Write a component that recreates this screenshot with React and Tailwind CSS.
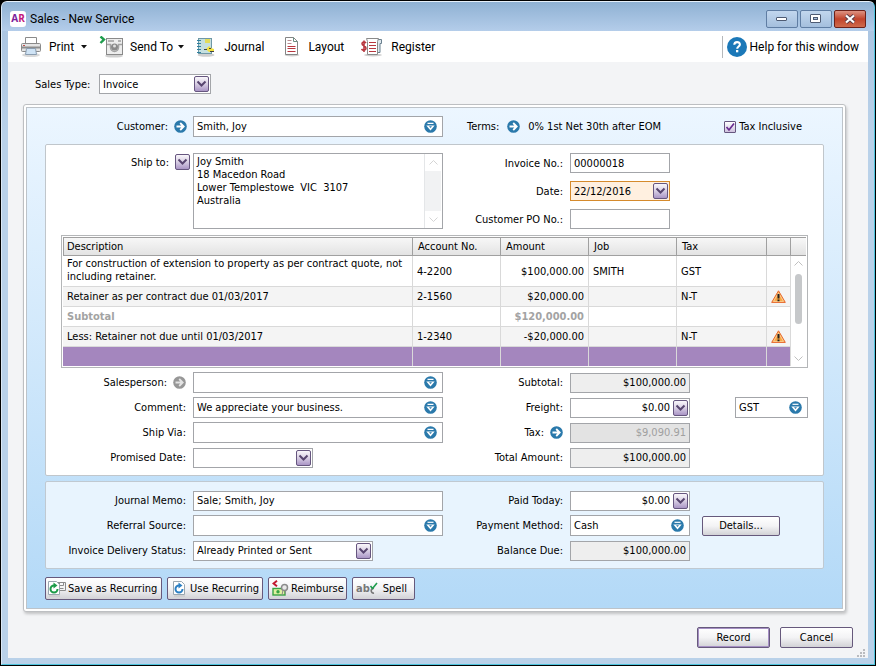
import { useState } from "react";
import clsx from "clsx";

/* ---------- icons ---------- */

function PrinterIcon() {
  return (
    <svg width="22" height="22" viewBox="0 0 22 22">
      <ellipse cx="11" cy="19" rx="9" ry="2" fill="#d9d9d9" />
      <path d="M5.5 8V1.5h11V8" fill="#fff" stroke="#8a8a8a" />
      <rect x="1.5" y="7.5" width="19" height="8" rx="1" fill="#e4e4e4" stroke="#8a8a8a" />
      <path d="M2 11.5h18" stroke="#8d8d8d" strokeWidth="2" />
      <rect x="3" y="9" width="2" height="1" fill="#c0504d" />
      <path d="M6.5 12.5h9l1 6h-11z" fill="#cfe3f5" stroke="#8a9db0" />
    </svg>
  );
}

function SendIcon() {
  return (
    <svg width="26" height="22" viewBox="0 0 26 22">
      <ellipse cx="15" cy="20" rx="9" ry="1.6" fill="#cfcfcf" />
      <path d="M1.5 .5 5 3.5 1.5 7" fill="none" stroke="#1f9d4d" strokeWidth="2.4" />
      <rect x="7.5" y="2.5" width="16" height="16" fill="#ededed" stroke="#8a8a8a" />
      <path d="M9 5h6M19 5h3" stroke="#777" />
      <path d="M8 8.5h3.500v3a4 4 0 0 0 8 0v-3H23" fill="none" stroke="#a2a2a2" strokeWidth="1.5" />
      <circle cx="15.5" cy="11" r="3.5" fill="#8a8a8a" />
      <circle cx="15.5" cy="10" r="1.5" fill="#e0e0e0" />
    </svg>
  );
}

function JournalIcon() {
  return (
    <svg width="20" height="22" viewBox="0 0 20 22">
      <ellipse cx="10" cy="19" rx="8.5" ry="1.8" fill="#cfcfcf" />
      <rect x="2.5" y="2.5" width="13" height="15" fill="#c5e0e0" stroke="#6f98a6" />
      <path d="M1 4.500h4M1 7.500h4M1 10.500h4M1 13.500h4M1 16.500h4" stroke="#2f7f9e" />
      <path d="M9 3h5v4H9z" fill="#e3dc5a" />
      <path d="m10 13 3-3 2 2 3 1v3h-5z" fill="#f2e03c" />
      <path d="M8 13.500h3M13 12.500h2M14 15.500h4" stroke="#444" />
    </svg>
  );
}

function LayoutIcon() {
  return (
    <svg width="16" height="22" viewBox="0 0 16 22">
      <ellipse cx="8" cy="19" rx="7.5" ry="1.5" fill="#cfcfcf" />
      <path d="M1.5 1.5h8l4 4v13h-12z" fill="#fff" stroke="#858585" />
      <path d="M9.5 1.5v4h4" fill="none" stroke="#6c8f83" />
      <path d="M3.5 4.5h4M3.5 7.5h4" stroke="#b88d90" />
      <path d="M3.500 10.500h8M3.500 12.500h8M3.500 15.500h8" stroke="#b8373f" />
    </svg>
  );
}

function RegisterIcon() {
  return (
    <svg width="23" height="22" viewBox="0 0 23 22">
      <ellipse cx="13" cy="19" rx="9" ry="1.5" fill="#cfcfcf" />
      <path d="M18 3.5h3.500v4H20v9h-2" fill="#dfe8ee" stroke="#6b8190" />
      <path d="M6.500 2.500h12l-1 3v13h-10v-13z" fill="#fff" stroke="#8a8a8a" />
      <path d="M9 6.500h7M9 9.500h7M9 12.500h7M9 15.500h7" stroke="#b8373f" />
      <path d="M6 7C5 5.500 2 5.500 2 7.800S6 10 6 12.200 3 15 1.500 13M4 4.500v11.500" fill="none" stroke="#b8373f" strokeWidth="1.600" />
    </svg>
  );
}

function HelpIcon() {
  return (
    <svg width="20" height="20" viewBox="0 0 20 20">
      <circle cx="10" cy="10" r="10" fill="#1b78b8" />
      <path d="M7.300 7.800c0-3.600 5.600-3.500 5.600-.3 0 2-2.700 2-2.700 4.200" fill="none" stroke="#fff" strokeWidth="2.100" />
      <rect x="9" y="13" width="2.300" height="2.300" fill="#fff" />
    </svg>
  );
}

function ArrowIcon({ muted }) {
  return (
    <svg width="13" height="13" viewBox="0 0 13 13">
      <circle cx="6.5" cy="6.5" r="6.3" fill={muted ? "#979797" : "#2a79ab"} />
      <path d="M2.500 6.500h7M6.200 3l3.500 3.500L6.200 10" fill="none" stroke={muted ? "#e4e4e4" : "#fff"} strokeWidth="1.800" />
    </svg>
  );
}

function LookupIcon() {
  return (
    <svg width="13" height="13" viewBox="0 0 13 13">
      <circle cx="6.5" cy="6.5" r="6.3" fill="#2a79ab" />
      <path d="M3.500 3.300h6" stroke="#fff" strokeWidth="1.200" />
      <path d="M2.300 5.500h8.400L6.500 10.500z" fill="#fff" />
      <path d="M5 6.200h3L6.500 8z" fill="#2a79ab" />
    </svg>
  );
}

function DropIcon() {
  return (
    <svg width="15" height="16" viewBox="0 0 15 16">
      <defs>
        <linearGradient id="drop" x2="0" y2="1">
          <stop offset="0" stopColor="#fbf9fc" />
          <stop offset=".45" stopColor="#dcd3e6" />
          <stop offset="1" stopColor="#a792c4" />
        </linearGradient>
      </defs>
      <rect x=".5" y=".5" width="14" height="15" rx="1.5" fill="url(#drop)" stroke="#66567f" />
      <path d="m3.5 5.5 4 4 4-4" fill="none" stroke="#57456f" strokeWidth="2" />
    </svg>
  );
}

function WarningIcon() {
  return (
    <svg className="mx-auto" width="15" height="13" viewBox="0 0 15 13">
      <path d="M7.500.8 14.300 12.400H.7z" fill="#f7a540" stroke="#e8672e" strokeLinejoin="round" />
      <path d="M7.500 2.800 12.500 11.400h-10z" fill="none" stroke="#fbd9a8" strokeWidth=".8" />
      <path d="M7.500 4v4.500M7.500 9.500v1.800" stroke="#222" strokeWidth="2" />
    </svg>
  );
}

function RecurIcon({ color, withDisk }) {
  return (
    <svg width={withDisk ? 18 : 14} height="17" viewBox={withDisk ? "0 0 18 17" : "0 0 14 17"}>
      {withDisk && <path d="M9.500 2.500h8v8h-8zM11.500 2.500v3h4v-3M11.500 8.500h4" fill="#f4f4f4" stroke="#8b8b8b" />}
      <path d="M.5 1.500h8l3 3v10h-11z" fill="#fff" stroke="#9aa7b0" />
      <path d="M9.500 9a3.500 3.500 0 1 1-3.500-3.500" fill="none" stroke={color} strokeWidth="2" />
      <path d="M5.500 2.500 9.500 5.500l-4 3z" fill={color} />
      <path d="M1 16h11" stroke="#c4c4c4" />
    </svg>
  );
}

function ReimburseIcon() {
  return (
    <svg width="17" height="17" viewBox="0 0 17 17">
      <path d="M5 .8 1.500 3.500 5 6.200" fill="none" stroke="#c2192f" strokeWidth="2" />
      <rect x="1" y="8.500" width="12" height="6.500" fill="#dff0a0" stroke="#38a343" strokeWidth="1.400" />
      <circle cx="6" cy="11.800" r="1.700" fill="#38a343" />
      <circle cx="12.500" cy="7.500" r="3" fill="#e8e8e8" stroke="#8b8b8b" strokeWidth="1.500" />
      <path d="m11 10-1 5M14 10l-1 4" stroke="#8b8b8b" />
    </svg>
  );
}

/* ---------- form pieces ---------- */

const box = "flex items-center border border-[#a3a5a9] bg-white";
const inner = "min-w-0 flex-1 self-stretch bg-transparent px-[3px] outline-none";

function Label({ htmlFor, children }) {
  return (
    <label htmlFor={htmlFor} className="whitespace-nowrap text-right">
      {children}
    </label>
  );
}

function LookupField({ id, value, className, label }) {
  return (
    <div className={clsx(box, "h-[21px]", className)}>
      <input id={id} aria-label={label} defaultValue={value} className={inner} />
      <button type="button" aria-label="Look up" className="mr-[5px]">
        <LookupIcon />
      </button>
    </div>
  );
}

function DropField({ id, value, className, right, active }) {
  return (
    <div
      className={clsx(
        "flex h-5 items-center border",
        active ? "border-[#d58a2c] bg-[#fff0e0]" : "border-[#a3a5a9] bg-white",
        className
      )}
    >
      <input id={id} defaultValue={value} className={clsx(inner, right && "text-right")} />
      <button type="button" aria-label="Open" className="mr-px">
        <DropIcon />
      </button>
    </div>
  );
}

function SelectField({ id, options, className }) {
  return (
    <div className={clsx("grid h-5 items-center border border-[#a3a5a9] bg-white", className)}>
      <select id={id} className="col-start-1 row-start-1 h-full w-full appearance-none bg-transparent pl-[3px] pr-5 outline-none">
        {options.map((o) => (
          <option key={o}>{o}</option>
        ))}
      </select>
      <span className="pointer-events-none col-start-1 row-start-1 mr-px justify-self-end">
        <DropIcon />
      </span>
    </div>
  );
}

function Total({ id, value, disabled }) {
  return (
    <input
      id={id}
      readOnly
      disabled={disabled}
      value={value}
      className={clsx(
        "h-5 w-[120px] border border-[#a3a5a9] px-[3px] text-right",
        disabled ? "bg-[#e3e3e3] text-[#a0a0a0]" : "bg-[#eeeeee]"
      )}
    />
  );
}

function PushButton({ children, className }) {
  return (
    <button
      type="button"
      className={clsx(
        "flex items-center rounded-[2px] border border-[#66597c] bg-linear-to-b from-white via-[#f3f3f5] via-50% to-[#d2d2d6]",
        className
      )}
    >
      {children}
    </button>
  );
}

/* ---------- sections ---------- */

function TitleBar() {
  const control = "flex h-[18px] w-8 items-center justify-center rounded-[2px] border";
  return (
    <header className="flex h-[29px] items-center bg-linear-to-b from-[#8fb1d3] to-[#b4cdea] pt-1 pl-2 pr-2">
      <span className="flex h-4 w-4 items-center justify-center rounded-[3px] bg-white font-['Open_Sans',sans-serif] text-[10px] font-bold text-[#7d1d9b]">
        A<span className="text-[#c2187c]">R</span>
      </span>
      <h1 className="ml-1 font-['Roboto',sans-serif] text-xs">Sales - New Service</h1>
      <div className="ml-auto flex gap-[2px]">
        <button aria-label="Minimize" className={clsx(control, "border-[#5f7da3] bg-linear-to-b from-[#c2d7ee] to-[#a4bfdd]")}>
          <svg width="12" height="6" viewBox="0 0 12 6">
            <rect x=".5" y="1.500" width="10" height="3" rx=".5" fill="#fff" stroke="#4e5b73" />
          </svg>
        </button>
        <button aria-label="Maximize" className={clsx(control, "border-[#5f7da3] bg-linear-to-b from-[#c2d7ee] to-[#a4bfdd]")}>
          <svg width="12" height="10" viewBox="0 0 12 10">
            <rect x=".5" y=".5" width="10" height="8" rx=".5" fill="#fff" stroke="#4e5b73" />
            <rect x="3.500" y="3.500" width="4" height="2" fill="#a8c0dc" stroke="#4e5b73" />
          </svg>
        </button>
        <button aria-label="Close" className={clsx(control, "border-[#6d2119] bg-linear-to-b from-[#dd9382] via-[#c1432b] via-50% to-[#cf6a4c]")}>
          <svg width="12" height="10" viewBox="0 0 12 10">
            <path d="m2 1.500 8 7M10 1.500l-8 7" stroke="#5b3d48" strokeWidth="4" />
            <path d="m2 1.500 8 7M10 1.500l-8 7" stroke="#fff" strokeWidth="2.200" />
          </svg>
        </button>
      </div>
    </header>
  );
}

function Caret() {
  return (
    <svg width="6" height="4" viewBox="0 0 6 4">
      <path d="M0 0h6L3 3.500z" fill="#111" />
    </svg>
  );
}

function Toolbar() {
  return (
    <nav className="flex h-[31px] items-center bg-white pl-3 pr-[9px] font-['Roboto',sans-serif] text-xs">
      <button className="flex items-center gap-[7px]">
        <PrinterIcon />
        Print
        <Caret />
      </button>
      <button className="ml-3 flex items-center gap-[5px]">
        <SendIcon />
        Send To
        <Caret />
      </button>
      <button className="ml-3 flex items-center gap-2">
        <JournalIcon />
        Journal
      </button>
      <button className="ml-5 flex items-center gap-2">
        <LayoutIcon />
        Layout
      </button>
      <button className="ml-4 flex items-center gap-2">
        <RegisterIcon />
        Register
      </button>
      <button className="ml-auto flex h-[22px] items-center gap-[3px] border-l border-[#b5b8bb] pl-1">
        <HelpIcon />
        Help for this window
      </button>
    </nav>
  );
}

const lines = [
  { text: "For construction of extension to property as per contract quote, not including retainer.", account: "4-2200", amount: "$100,000.00", job: "SMITH", tax: "GST", wrap: true },
  { text: "Retainer as per contract due 01/03/2017", account: "2-1560", amount: "$20,000.00", tax: "N-T", warn: true },
  { text: "Subtotal", amount: "$120,000.00", subtotal: true },
  { text: "Less: Retainer not due until 01/03/2017", account: "1-2340", amount: "-$20,000.00", tax: "N-T", warn: true },
];

function LineTable() {
  const th = "border-r border-[#a0a0a0] px-[5px] text-left font-normal";
  const td = "border-r border-b border-[#d9d9d9] px-1";
  return (
    <div className="flex border border-[#b4b6b8] p-px">
      <table className="min-w-0 flex-1 table-fixed border-separate border-spacing-0">
        <colgroup>
          <col />
          <col className="w-[88px]" />
          <col className="w-[88px]" />
          <col className="w-[88px]" />
          <col className="w-[90px]" />
          <col className="w-[23px]" />
        </colgroup>
        <thead>
          <tr className="h-[19px] bg-linear-to-b from-[#f8f8f8] to-[#e2e2e2]">
            {["Description", "Account No.", "Amount", "Job", "Tax", ""].map((h, i) => (
              <th key={i} className={clsx(th, "border-t border-b", i === 0 && "border-l pl-[3px]")}>
                {h}
              </th>
            ))}
          </tr>
        </thead>
        <tbody>
          {lines.map((l) => (
            <tr
              key={l.text}
              className={clsx(
                "h-5 leading-[13px]",
                l.warn && "bg-[#f4f4f4]",
                l.subtotal && "font-bold text-[#a3a3a3]"
              )}
            >
              <td className={clsx(td, l.wrap && "pt-px pb-[3px]")}>{l.text}</td>
              <td className={td}>{l.account}</td>
              <td className={clsx(td, "text-right")}>{l.amount}</td>
              <td className={td}>{l.job}</td>
              <td className={td}>{l.tax}</td>
              <td className={clsx(td, "px-0")}>{l.warn && <WarningIcon />}</td>
            </tr>
          ))}
          <tr className="h-[19px] bg-[#a486be]">
            {[0, 1, 2, 3, 4, 5].map((i) => (
              <td key={i} className="border-r border-[#d9d9d9]" />
            ))}
          </tr>
        </tbody>
      </table>
      <div className="flex w-[15px] flex-col items-center">
        <div className="h-[19px] w-full border-y border-[#a0a0a0] bg-linear-to-b from-[#f8f8f8] to-[#e2e2e2]" />
        <svg className="mt-[5px]" width="9" height="5" viewBox="0 0 9 5">
          <path d="m.5 4.500 4-4 4 4" fill="none" stroke="#c0c0c0" />
        </svg>
        <div className="mt-2 h-[50px] w-[7px] rounded-full bg-[#c6c8ca]" />
        <svg className="mt-auto mb-[5px]" width="9" height="5" viewBox="0 0 9 5">
          <path d="m.5.5 4 4 4-4" fill="none" stroke="#c0c0c0" />
        </svg>
      </div>
    </div>
  );
}

export default function App() {
  const [taxInclusive, setTaxInclusive] = useState(true);
  const cols = "grid grid-cols-[140px_250px_113px_1fr] gap-x-[7px] items-center";

  return (
    <div className="flex min-h-screen flex-col bg-black font-['DejaVu_Sans_Condensed','DejaVu_Sans',sans-serif] text-[11px] leading-[13px] text-black">
      <div className="m-px flex flex-1 flex-col overflow-hidden rounded-t-[6px] border border-t-[#e6f0fa] border-r-[#4fc4dd] border-b-[#4fc4dd] border-l-[#dbe8f5] bg-linear-to-b from-[#a9c3e0] to-[#b9d1e9] to-20%">
        <TitleBar />
        <div className="mx-[6px] mb-[6px] flex flex-1 flex-col bg-[#f3f4f6]">
          <Toolbar />

          <form className="flex flex-1 flex-col px-[15px]" onSubmit={(e) => e.preventDefault()}>
            <div className="mt-3 flex items-center pl-3">
              <label htmlFor="salesType" className="w-16">Sales Type:</label>
              <SelectField id="salesType" options={["Invoice", "Quote", "Order"]} className="w-28" />
            </div>

            <div className="mt-[10px] mr-[7px] rounded-[3px] border border-[#bdbfc2] bg-white p-[2px] shadow-[1px_2px_3px_rgba(0,0,0,0.2)]">
              <div className="border border-[#bdc3c9] bg-linear-to-b from-[#ecf6ff] to-[#b3d9f7] px-[18px] pt-2 pb-2">
                {/* customer and terms */}
                <div className="flex items-center">
                  <div className="flex w-[148px] items-center justify-end gap-[6px] pr-[6px]">
                    <Label htmlFor="customer">Customer:</Label>
                    <button type="button" aria-label="Open customer"><ArrowIcon /></button>
                  </div>
                  <LookupField id="customer" value="Smith, Joy" className="w-[250px]" />
                  <div className="ml-6 flex items-center gap-2">
                    <span>Terms:</span>
                    <button type="button" aria-label="Edit terms"><ArrowIcon /></button>
                    <span>0% 1st Net 30th after EOM</span>
                  </div>
                  <label className="ml-auto mr-[22px] flex items-center gap-[3px]">
                    <span className="grid h-3 w-3 place-items-center">
                      <input
                        type="checkbox"
                        checked={taxInclusive}
                        onChange={(e) => setTaxInclusive(e.target.checked)}
                        className="col-start-1 row-start-1 h-3 w-3 appearance-none rounded-[1px] border border-[#66567f] bg-linear-to-b from-white to-[#cfc2de]"
                      />
                      {taxInclusive && (
                        <svg className="pointer-events-none col-start-1 row-start-1" width="10" height="10" viewBox="0 0 10 10">
                          <path d="m1.500 5 2.500 3 5-6.500" fill="none" stroke="#6a2c91" strokeWidth="1.700" />
                        </svg>
                      )}
                    </span>
                    Tax Inclusive
                  </label>
                </div>

                {/* invoice body */}
                <section className="mt-[7px] rounded-[2px] border border-[#c0c6cb] bg-white pt-2 pb-[7px]">
                  <div className={cols}>
                    <div className="flex items-start justify-end gap-[6px] self-start">
                      <span className="mt-[3px]"><Label htmlFor="shipTo">Ship to:</Label></span>
                      <button type="button" aria-label="Choose address" className="mt-px mr-[-4px]"><DropIcon /></button>
                    </div>
                    <div className="flex h-[76px] border border-[#a3a5a9] bg-white">
                      <textarea
                        id="shipTo"
                        className="min-w-0 flex-1 resize-none overflow-hidden px-[3px] pt-px outline-none"
                        defaultValue={"Joy Smith\n18 Macedon Road\nLower Templestowe  VIC  3107\nAustralia"}
                      />
                      <div className="mr-px flex w-[17px] flex-col items-center border-l border-[#e4e6e8]">
                        <svg className="my-[6px]" width="9" height="5" viewBox="0 0 9 5">
                          <path d="m.5 4.500 4-4 4 4" fill="none" stroke="#d4d4d4" />
                        </svg>
                        <div className="w-full flex-1 bg-[#f1f2f3]" />
                        <svg className="my-[6px]" width="9" height="5" viewBox="0 0 9 5">
                          <path d="m.5.5 4 4 4-4" fill="none" stroke="#d4d4d4" />
                        </svg>
                      </div>
                    </div>
                    <div className="col-span-2 grid grid-cols-[113px_100px] items-center gap-x-[7px] gap-y-2">
                      <Label htmlFor="invoiceNo">Invoice No.:</Label>
                      <input id="invoiceNo" defaultValue="00000018" className="h-5 border border-[#a3a5a9] bg-white px-[3px]" />
                      <Label htmlFor="date">Date:</Label>
                      <DropField id="date" value="22/12/2016" active />
                      <Label htmlFor="po">Customer PO No.:</Label>
                      <input id="po" className="h-5 border border-[#a3a5a9] bg-white px-[3px]" />
                    </div>
                  </div>

                  <div className="mx-[15px] mt-[6px]">
                    <LineTable />
                  </div>

                  <div className={clsx(cols, "mt-1 auto-rows-[21px] gap-y-1")}>
                    <div className="flex items-center justify-end gap-[6px]">
                      <Label htmlFor="salesperson">Salesperson:</Label>
                      <button type="button" aria-label="Open salesperson"><ArrowIcon muted /></button>
                    </div>
                    <LookupField id="salesperson" />
                    <Label htmlFor="subtotal">Subtotal:</Label>
                    <Total id="subtotal" value="$100,000.00" />

                    <Label htmlFor="comment">Comment:</Label>
                    <LookupField id="comment" value="We appreciate your business." />
                    <Label htmlFor="freight">Freight:</Label>
                    <div className="flex items-center justify-between pr-[15px]">
                      <DropField id="freight" value="$0.00" right className="w-[120px]" />
                      <LookupField id="freightTax" label="Freight tax code" value="GST" className="w-[73px]" />
                    </div>

                    <Label htmlFor="shipVia">Ship Via:</Label>
                    <LookupField id="shipVia" />
                    <div className="flex items-center justify-end gap-[6px]">
                      <Label htmlFor="tax">Tax:</Label>
                      <button type="button" aria-label="Open tax"><ArrowIcon /></button>
                    </div>
                    <Total id="tax" value="$9,090.91" disabled />

                    <Label htmlFor="promised">Promised Date:</Label>
                    <DropField id="promised" className="w-[120px]" />
                    <Label htmlFor="total">Total Amount:</Label>
                    <Total id="total" value="$100,000.00" />
                  </div>
                </section>

                {/* memo and payment */}
                <section className="mt-[5px] rounded-[2px] border border-[#c0c9d1] bg-[#e8f4fe] pt-2 pb-[7px]">
                  <div className={clsx(cols, "auto-rows-[21px] gap-y-1")}>
                    <Label htmlFor="memo">Journal Memo:</Label>
                    <input id="memo" defaultValue="Sale; Smith, Joy" className="h-5 border border-[#a3a5a9] bg-white px-[3px]" />
                    <Label htmlFor="paid">Paid Today:</Label>
                    <DropField id="paid" value="$0.00" right className="w-[120px]" />

                    <Label htmlFor="referral">Referral Source:</Label>
                    <LookupField id="referral" />
                    <Label htmlFor="method">Payment Method:</Label>
                    <div className="flex items-center gap-3">
                      <LookupField id="method" value="Cash" className="w-[120px]" />
                      <PushButton className="h-5 w-[78px] justify-center">Details...</PushButton>
                    </div>

                    <Label htmlFor="delivery">Invoice Delivery Status:</Label>
                    <SelectField id="delivery" options={["Already Printed or Sent", "To be Printed", "To be Emailed"]} className="w-[180px]" />
                    <Label htmlFor="balance">Balance Due:</Label>
                    <Total id="balance" value="$100,000.00" />
                  </div>
                </section>

                <div className="mt-2 flex gap-[5px]">
                  <PushButton className="h-[23px] w-[117px] gap-[2px] pl-[2px]">
                    <RecurIcon color="#1b9b48" withDisk />
                    Save as Recurring
                  </PushButton>
                  <PushButton className="h-[23px] w-24 gap-[3px] pl-[5px]">
                    <RecurIcon color="#2b7fc3" />
                    Use Recurring
                  </PushButton>
                  <PushButton className="h-[23px] w-[79px] gap-[2px] pl-[3px]">
                    <ReimburseIcon />
                    Reimburse
                  </PushButton>
                  <PushButton className="h-[23px] w-[63px] gap-[5px] pl-[3px]">
                    <span className="flex items-center font-bold text-[#777]">
                      ab
                      <svg className="-ml-px" width="9" height="14" viewBox="0 0 9 14">
                        <path d="M5 6.500a2.300 2.300 0 1 0 0 4.500" fill="none" stroke="#777" strokeWidth="1.700" />
                        <path d="m1.500 4 2 2.500L8 1" fill="none" stroke="#1f9d4d" strokeWidth="1.600" />
                      </svg>
                    </span>
                    Spell
                  </PushButton>
                </div>
              </div>
            </div>

            <div className="mt-auto flex justify-end gap-[10px] pt-3 pb-3">
              <PushButton className="h-[21px] w-[73px] justify-center shadow-[inset_0_0_0_1px_#a58fc4]">Record</PushButton>
              <PushButton className="h-[21px] w-[73px] justify-center">Cancel</PushButton>
            </div>
          </form>

          {/* resize grip */}
          <svg className="-mt-[11px] mr-[2px] self-end" width="9" height="9" viewBox="0 0 9 9">
            <path d="M6 0h2v2H6zM3 3h2v2H3zM6 3h2v2H6zM0 6h2v2H0zM3 6h2v2H3zM6 6h2v2H6z" fill="#b9bbbf" />
          </svg>
        </div>
      </div>
    </div>
  );
}
